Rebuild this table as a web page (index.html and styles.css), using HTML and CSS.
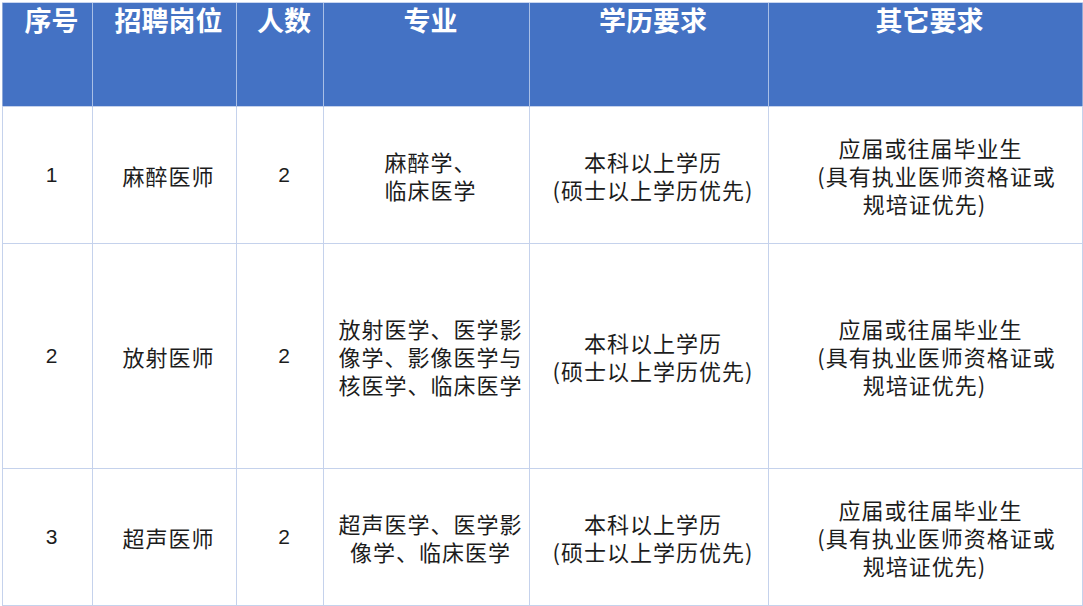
FILE: index.html
```html
<!DOCTYPE html>
<html lang="zh">
<head>
<meta charset="utf-8">
<title>招聘岗位</title>
<link rel="stylesheet" href="styles.css">
</head>
<body>
<table class="jobs">
  <colgroup>
    <col class="c1"><col class="c2"><col class="c3"><col class="c4"><col class="c5"><col class="c6">
  </colgroup>
  <thead>
    <tr class="head">
      <th>序号</th><th>招聘岗位</th><th>人数</th><th>专业</th><th>学历要求</th><th>其它要求</th>
    </tr>
  </thead>
  <tbody>
    <tr class="r1">
      <td class="num">1</td>
      <td>麻醉医师</td>
      <td class="num">2</td>
      <td>麻醉学、<br>临床医学</td>
      <td>本科以上学历<br>(硕士以上学历优先)</td>
      <td class="other">应届或往届毕业生<br>&nbsp;&nbsp;(具有执业医师资格证或<br>规培证优先)&nbsp;&nbsp;</td>
    </tr>
    <tr class="r2">
      <td class="num">2</td>
      <td>放射医师</td>
      <td class="num">2</td>
      <td>放射医学、医学影<br>像学、影像医学与<br>核医学、临床医学</td>
      <td>本科以上学历<br>(硕士以上学历优先)</td>
      <td class="other">应届或往届毕业生<br>&nbsp;&nbsp;(具有执业医师资格证或<br>规培证优先)&nbsp;&nbsp;</td>
    </tr>
    <tr class="r3">
      <td class="num">3</td>
      <td>超声医师</td>
      <td class="num">2</td>
      <td>超声医学、医学影<br>像学、临床医学</td>
      <td>本科以上学历<br>(硕士以上学历优先)</td>
      <td class="other">应届或往届毕业生<br>&nbsp;&nbsp;(具有执业医师资格证或<br>规培证优先)&nbsp;&nbsp;</td>
    </tr>
  </tbody>
</table>
</body>
</html>
```

FILE: styles.css
```css
html, body {
  margin: 0;
  padding: 0;
  background: #ffffff;
}

body {
  padding: 2px 0 0 2px;
  font-family: "Noto Sans CJK SC", "Noto Sans", sans-serif;
  color: #1c1c1c;
}

.jobs {
  border-collapse: collapse;
  table-layout: fixed;
  width: 1080px;
  border: 1px solid #8fa9d8;
}

.c1 { width: 90px; }
.c2 { width: 144px; }
.c3 { width: 87px; }
.c4 { width: 206px; }
.c5 { width: 239px; }
.c6 { width: 314px; }

.head th {
  background: #4472c4;
  color: #ffffff;
  font-weight: 700;
  font-size: 27px;
  line-height: 34px;
  height: 104px;
  padding: 0 0 0 8px;
  box-sizing: border-box;
  vertical-align: top;
  text-align: center;
  border-left: 1px solid #a9bfe6;
  border-top: 1px solid #c9d6f0;
}

.head th:first-child {
  border-left: none;
}

td {
  border: 1px solid #c5d2ec;
  font-size: 22px;
  line-height: 28px;
  text-align: center;
  vertical-align: middle;
  padding: 0 0 0 8px;
  letter-spacing: 1px;
}

td.num {
  font-family: "Liberation Sans", Arial, sans-serif;
  font-size: 21px;
  letter-spacing: 0;
}

td.other {
  padding-left: 10px;
}

.r1 td { height: 136px; }
.r2 td { height: 224px; }
.r3 td { height: 136px; }
```
